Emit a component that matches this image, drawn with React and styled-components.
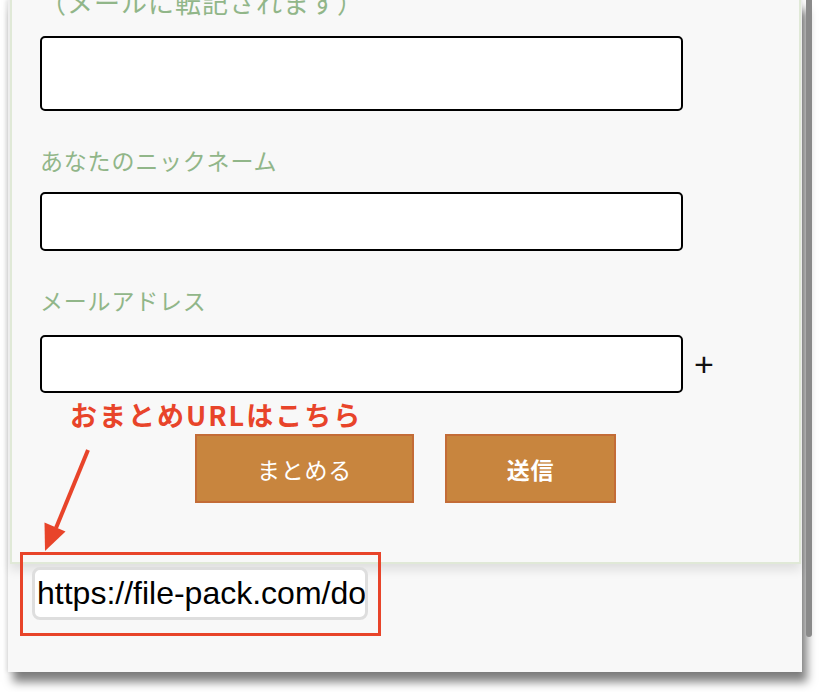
import React from "react";
import styled, { createGlobalStyle } from "styled-components";

const GlobalStyle = createGlobalStyle`
  body {
    margin: 0;
    background: #ffffff;
    font-family: "Noto Sans CJK JP", "Noto Sans", sans-serif;
  }
`;

const Page = styled.div`
  padding: 0 0 20px 8px;
`;

const Frame = styled.div`
  position: relative;
  display: flow-root;
  width: 794px;
  height: 672px;
  background: #f8f8f8;
  box-shadow: 5px 10px 9px rgba(0, 0, 0, 0.5), -2px 0 4px rgba(0, 0, 0, 0.08);
`;

const ScrollThumb = styled.div`
  position: absolute;
  left: 798px;
  top: 0;
  width: 6px;
  height: 637px;
  border-radius: 0 0 3px 3px;
  background: #8a8a8a;
`;

const Card = styled.div`
  margin: -60px 1px 0 2px;
  padding: 44px 0 59px 28px;
  background: #f8f8f8;
  border: 2px solid #e0e9d7;
  box-shadow: 0 6px 10px rgba(0, 0, 0, 0.1);
`;

const Field = styled.div`
  display: flex;
  flex-direction: column;
  margin-bottom: 33px;
`;

const Label = styled.label`
  font-size: ${(p) => p.$size || 23}px;
  line-height: 32px;
  letter-spacing: ${(p) => (p.$size ? 1 : 0.8)}px;
  color: #91b689;
  margin-bottom: ${(p) => p.$gap || 16}px;
  white-space: nowrap;
`;

const InputRow = styled.div`
  display: flex;
  align-items: center;
  gap: 11px;
`;

const TextBox = styled.input`
  box-sizing: border-box;
  width: 643px;
  height: ${(p) => p.$h}px;
  border: 2px solid #000;
  border-radius: 5px;
  background: #fff;
  outline: none;
`;

const Plus = styled.span`
  font-family: "Liberation Sans", Arial, sans-serif;
  font-size: 34px;
  line-height: 1;
  color: #111;
`;

const Buttons = styled.div`
  display: flex;
  justify-content: center;
  gap: 31px;
  margin-top: 41px;
  margin-left: -28px;
`;

const Button = styled.button`
  box-sizing: border-box;
  width: ${(p) => p.$w}px;
  height: 69px;
  padding: 0;
  background: #c8853e;
  border: 2px solid #c36c37;
  color: #fff;
  font-family: "Noto Sans CJK JP", sans-serif;
  font-size: 23px;
  font-weight: ${(p) => (p.$bold ? 700 : 400)};
  letter-spacing: 0.8px;
  cursor: pointer;
`;

const UrlBox = styled.input`
  box-sizing: border-box;
  display: block;
  width: 336px;
  height: 53px;
  margin: 3px 0 0 24px;
  padding: 0 0 0 2px;
  border: 3px solid #dedede;
  border-radius: 8px;
  background: #fff;
  font-family: "Liberation Sans", Arial, sans-serif;
  font-size: 32px;
  color: #000;
  outline: none;
`;

const Note = styled.div`
  position: absolute;
  left: 62px;
  top: 398px;
  font-size: 27px;
  line-height: 34px;
  font-weight: 700;
  letter-spacing: 2px;
  color: #e8442a;
`;

const Highlight = styled.div`
  position: absolute;
  left: 12px;
  top: 552px;
  width: 361px;
  height: 84px;
  box-sizing: border-box;
  border: 3px solid #e8442a;
`;

const Arrow = styled.svg`
  position: absolute;
  left: 32px;
  top: 440px;
`;

export default function App() {
  return (
    <>
      <GlobalStyle />
      <Page>
        <Frame>
          <Card>
            <Field>
              <Label $size={26} $gap={18}>（メールに転記されます）</Label>
              <TextBox $h={75} />
            </Field>
            <Field>
              <Label>あなたのニックネーム</Label>
              <TextBox $h={59} />
            </Field>
            <Field style={{ marginBottom: 0 }}>
              <Label $gap={19}>メールアドレス</Label>
              <InputRow>
                <TextBox $h={58} />
                <Plus>+</Plus>
              </InputRow>
            </Field>
            <Buttons>
              <Button $w={219}>まとめる</Button>
              <Button $w={171} $bold>送信</Button>
            </Buttons>
          </Card>
          <UrlBox readOnly value="https://file-pack.com/do" />

          <Note>おまとめURLはこちら</Note>
          <Arrow width="60" height="115" viewBox="0 0 60 115">
            <line x1="48" y1="10" x2="16" y2="88" stroke="#e8442a" strokeWidth="4" />
            <polygon points="5,111 25.5,91.5 4.5,82.5" fill="#e8442a" />
          </Arrow>
          <Highlight />
          <ScrollThumb />
        </Frame>
      </Page>
    </>
  );
}
